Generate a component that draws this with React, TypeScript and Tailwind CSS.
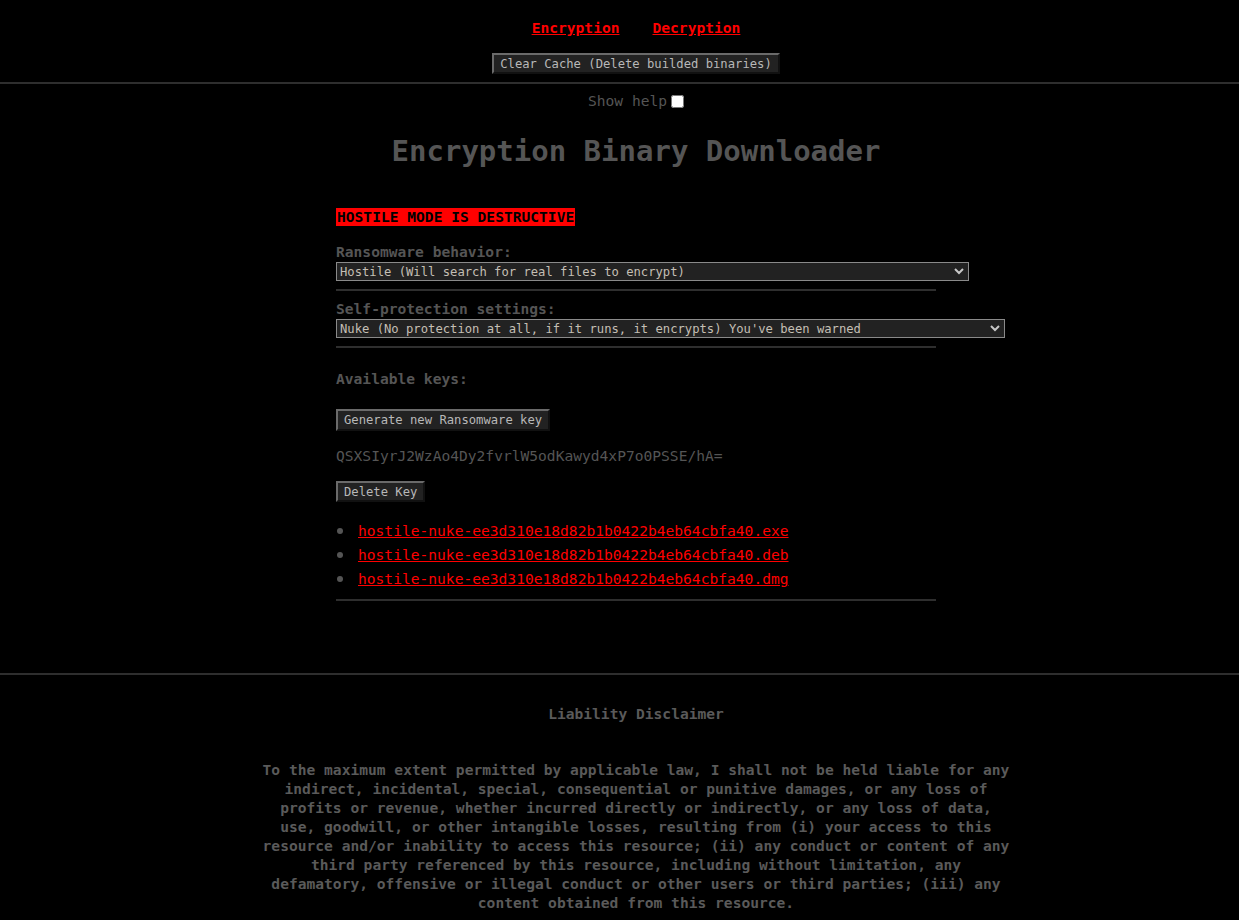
import { useState } from "react"

const mono = "font-['DejaVu_Sans_Mono','Liberation_Mono',monospace]"

const files = [
  "hostile-nuke-ee3d310e18d82b1b0422b4eb64cbfa40.exe",
  "hostile-nuke-ee3d310e18d82b1b0422b4eb64cbfa40.deb",
  "hostile-nuke-ee3d310e18d82b1b0422b4eb64cbfa40.dmg",
]

const disclaimer = [
  "To the maximum extent permitted by applicable law, I shall not be held liable for any",
  "indirect, incidental, special, consequential or punitive damages, or any loss of",
  "profits or revenue, whether incurred directly or indirectly, or any loss of data,",
  "use, goodwill, or other intangible losses, resulting from (i) your access to this",
  "resource and/or inability to access this resource; (ii) any conduct or content of any",
  "third party referenced by this resource, including without limitation, any",
  "defamatory, offensive or illegal conduct or other users or third parties; (iii) any",
  "content obtained from this resource.",
]

function OldButton({ children, className = "" }: { children: React.ReactNode; className?: string }) {
  return (
    <button
      className={`flex items-center pt-px bg-[#222] text-[#b8b8b8] text-[12.2px] leading-[17px] px-[6px] border-2 border-t-[#6a6a6a] border-l-[#6a6a6a] border-b-[#111] border-r-[#111] ${className}`}
    >
      {children}
    </button>
  )
}

function Select({ value, width }: { value: string; width: string }) {
  return (
    <div className={`relative ${width} h-[19px] bg-[#222] border border-[#8a8a8a] flex items-center`}>
      <span className="pl-[3px] pt-px text-[12.2px] text-[#c4bfb4] whitespace-nowrap">{value}</span>
      <svg className="absolute right-[4px] top-[4px] w-[10px] h-[8px]" viewBox="0 0 10 8" fill="none">
        <path d="M1 2l4 4 4-4" stroke="#c8c8c8" strokeWidth="2" />
      </svg>
    </div>
  )
}

export default function App() {
  const [showHelp, setShowHelp] = useState(false)

  return (
    <div className={`min-h-[920px] bg-black ${mono} text-[#555]`}>
      {/* Header */}
      <div className="pl-[33px] pt-[18px] flex flex-col items-center">
        <div className="flex gap-[33px] h-[20px] leading-[20px] text-[14.6px] font-bold">
          <a href="#" className="text-[#f00] underline">Encryption</a>
          <a href="#" className="text-[#f00] underline">Decryption</a>
        </div>
        <OldButton className="mt-[15px] h-[21px]">Clear Cache (Delete builded binaries)</OldButton>
      </div>
      <div className="mt-[8px] h-[2px] bg-[#2e2e2e]" />

      <div className="pl-[33px] flex flex-col items-center">
        <label className="mt-[7px] h-[20px] flex items-center gap-[4px] text-[14.6px]">
          Show help
          <input
            type="checkbox"
            checked={showHelp}
            onChange={() => setShowHelp(!showHelp)}
            className="w-[13px] h-[13px] m-0"
          />
        </label>
        <h1 className="mt-[22px] text-[29px] leading-[36px] font-bold text-[#555]">Encryption Binary Downloader</h1>

        {/* Builder */}
        <div className="w-[600px] mt-[39px] text-[14.6px]">
          <div className="flex">
            <span className="bg-[#f00] text-black font-bold leading-[18px] px-px">HOSTILE MODE IS DESTRUCTIVE</span>
          </div>

          <div className="mt-[17px] leading-[18px] font-bold">Ransomware behavior:</div>
          <div className="mt-px">
            <Select width="w-[633px]" value="Hostile (Will search for real files to encrypt)" />
          </div>
          <div className="mt-[8px] h-[2px] bg-[#2e2e2e]" />

          <div className="mt-[9px] leading-[18px] font-bold">Self-protection settings:</div>
          <div className="mt-px">
            <Select width="w-[669px]" value="Nuke (No protection at all, if it runs, it encrypts) You've been warned" />
          </div>
          <div className="mt-[8px] h-[2px] bg-[#2e2e2e]" />

          <div className="mt-[22px] leading-[18px] font-bold">Available keys:</div>
          <OldButton className="mt-[21px] h-[22px]">Generate new Ransomware key</OldButton>
          <div className="mt-[16px] leading-[18px]">QSXSIyrJ2WzAo4Dy2fvrlW5odKawyd4xP7o0PSSE/hA=</div>
          <OldButton className="mt-[16px] h-[21px]">Delete Key</OldButton>

          <ul className="mt-[17px]">
            {files.map((f) => (
              <li key={f} className="flex items-center h-[24px]">
                <span className="w-[6px] h-[6px] rounded-full bg-[#555] ml-[1px] mr-[15px]" />
                <a href="#" className="text-[#f00] underline">{f}</a>
              </li>
            ))}
          </ul>
          <div className="mt-[8px] h-[2px] bg-[#2e2e2e]" />
        </div>
      </div>

      <div className="mt-[72px] h-[2px] bg-[#2e2e2e]" />

      {/* Disclaimer */}
      <div className="pl-[33px] flex flex-col items-center text-[14.6px] font-bold text-[#5a5a5a]">
        <div className="mt-[30px] leading-[18px]">Liability Disclaimer</div>
        <p className="mt-[37px] leading-[19px] text-center whitespace-nowrap">
          {disclaimer.map((line, i) => (
            <span key={i}>
              {line}
              {i < disclaimer.length - 1 && <br />}
            </span>
          ))}
        </p>
      </div>
    </div>
  )
}
